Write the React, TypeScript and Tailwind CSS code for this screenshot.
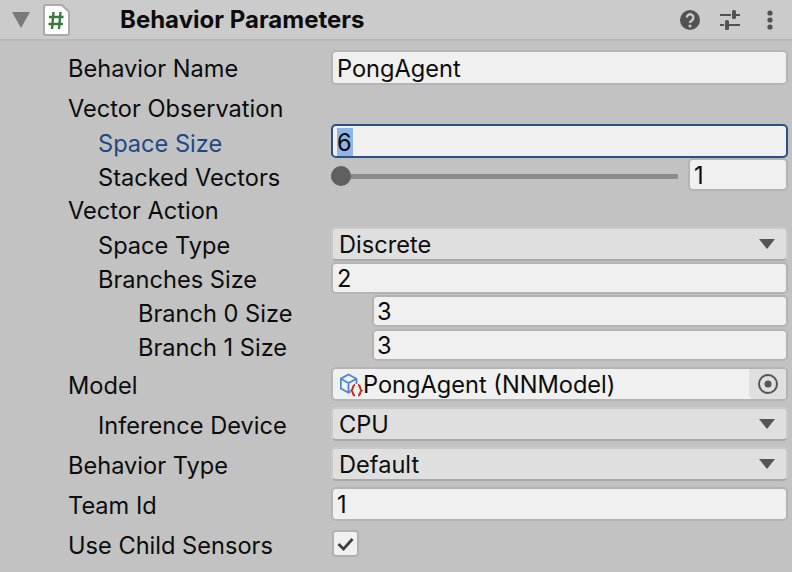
import React from "react";

const font = { fontFamily: "Inter, 'Liberation Sans', sans-serif" };

function Input({ value, className = "h-[34px] mb-[2px] pl-[4px]" }: { value: string; className?: string }) {
  return (
    <div className={`flex items-center rounded-[5px] border-2 border-[#b4b4b4] bg-[#f0f0f0] pt-[2px] ${className}`}>
      {value}
    </div>
  );
}

function Dropdown({ value }: { value: string }) {
  return (
    <div className="mb-[2px] flex h-[34px] items-center justify-between rounded-[5px] border-2 border-t-[#c9c9c9] border-x-[#c9c9c9] border-b-[#a8a8a8] bg-[#dfdfdf] pl-[6px] pr-[11px]">
      <span className="pt-[1px]">{value}</span>
      <svg width="16" height="10" viewBox="0 0 16 10"><path d="M0 0h16l-8 10z" fill="#555550" /></svg>
    </div>
  );
}

const labelCol = ["w-[331px] pl-[68px]", "w-[331px] pl-[98px]", "w-[372px] pl-[138px]"];

function Row({ label, indent = 0, h, mt = "", children, labelClass = "" }: { label: string; indent?: number; h: string; mt?: string; children?: React.ReactNode; labelClass?: string }) {
  return (
    <div className={`flex items-center pr-[4px] ${h} ${mt}`}>
      <span className={`shrink-0 whitespace-nowrap pt-[1px] ${labelCol[indent]} ${labelClass}`}>{label}</span>
      <div className="min-w-0 flex-1">{children}</div>
    </div>
  );
}

export default function App() {
  return (
    <div className="h-[572px] w-[792px] overflow-hidden bg-[#c2c2c2] text-[23.6px] leading-none text-[#0c0c0c]" style={font}>
      <div className="flex h-[41px] items-center border-b-2 border-[#b8b8b8] bg-[#cbcbcb]">
        <svg className="ml-[12px]" width="18" height="16" viewBox="0 0 18 16"><path d="M0 0h18l-9 16z" fill="#7a7a7a" /></svg>
        <svg className="ml-[13px]" width="27" height="32" viewBox="0 0 27 32">
          <path d="M3 1h16l7 7v21a2 2 0 0 1-2 2H3a2 2 0 0 1-2-2V3a2 2 0 0 1 2-2z" fill="#fff" stroke="#ababab" strokeWidth="2" />
          <path d="M10.500 8L9 25M17.500 8L16 25M6 13h14.500M5.500 20h14.500" stroke="#3b7a3f" strokeWidth="2.400" fill="none" />
        </svg>
        <span className="ml-[50px] text-[24px] font-bold">Behavior Parameters</span>
        <svg className="ml-auto" width="20" height="20" viewBox="0 0 20 20">
          <circle cx="10" cy="10" r="10" fill="#525252" />
          <path d="M6.800 7.600a3.300 3.300 0 1 1 5 2.800c-1.200.8-1.800 1.200-1.800 2.600" stroke="#cbcbcb" strokeWidth="2.400" fill="none" />
          <circle cx="10" cy="16" r="1.500" fill="#cbcbcb" />
        </svg>
        <svg className="ml-[20px]" width="20" height="20" viewBox="0 0 20 20" fill="#525252">
          <rect x="0" y="4" width="11" height="2" /><rect x="12" y="0" width="4" height="9" rx="1.500" /><rect x="16" y="4" width="4" height="2" />
          <rect x="0" y="14" width="4" height="2" /><rect x="5" y="10" width="4" height="10" rx="1.500" /><rect x="9" y="14" width="11" height="2" />
        </svg>
        <svg className="ml-[27px] mr-[19px]" width="6" height="20" viewBox="0 0 6 20" fill="#525252">
          <circle cx="3" cy="3" r="2.600" /><circle cx="3" cy="10" r="2.600" /><circle cx="3" cy="17" r="2.600" />
        </svg>
      </div>

      <Row label="Behavior Name" h="h-[36px]" mt="mt-[9px]"><Input value="PongAgent" className="mb-[1px] h-[35px] pl-[4px]" /></Row>
      <Row label="Vector Observation" h="h-[36px]" mt="mt-[4px]" />
      <Row label="Space Size" indent={1} h="h-[36px]" mt="mt-[-1px]" labelClass="text-[#1d4a86]">
        <div className="mb-[4px] flex h-[34px] items-end rounded-[5px] border-2 border-[#275187] bg-[#f0f0f0] pl-[4px]">
          <span className="flex h-[28px] w-[16px] items-center bg-[#8fb4e6] pt-[1px]">6</span>
        </div>
      </Row>
      <Row label="Stacked Vectors" indent={1} h="h-[34px]" mt="mt-[-1px]">
        <div className="mb-[5px] flex h-[33px] items-start">
          <div className="relative mt-[8px] flex h-[20px] w-[347px] items-center">
            <div className="h-[5px] w-full bg-[#8c8c8c]" />
            <div className="absolute left-0 h-[20px] w-[20px] rounded-full bg-[#5f5f5f]" />
          </div>
          <Input value="1" className="ml-[10px] h-[33px] flex-1 pl-[4px]" />
        </div>
      </Row>
      <Row label="Vector Action" h="h-[34px]" mt="mt-[-1px]" />
      <Row label="Space Type" indent={1} h="h-[36px]"><Dropdown value="Discrete" /></Row>
      <Row label="Branches Size" indent={1} h="h-[34px]" mt="mt-[-1px]"><Input value="2" className="mb-[2px] h-[32px] pl-[4px]" /></Row>
      <Row label="Branch 0 Size" indent={2} h="h-[34px]"><Input value="3" className="mb-[4px] h-[32px] pl-[3px]" /></Row>
      <Row label="Branch 1 Size" indent={2} h="h-[34px]"><Input value="3" className="mb-[4px] h-[32px] pl-[3px]" /></Row>
      <Row label="Model" h="h-[36px]" mt="mt-[3px]">
        <div className="mb-[2px] flex h-[34px] items-center overflow-hidden rounded-[5px] border-2 border-[#b4b4b4] bg-[#f0f0f0] pl-[7px]">
          <svg width="23" height="26" viewBox="0 0 23 26">
            <path d="M8.500 3.500l8 4.200v9.800l-8 4.300-7.700-4.300V7.700zM.8 7.700l7.700 4.300 8-4.300M8.500 12v9.800" fill="none" stroke="#4a86d8" strokeWidth="1.800" />
            <rect x="10.500" y="13" width="12" height="13" fill="#f0f0f0" />
            <path d="M15 14c-2.800 0-1.500 4.300-3.500 5.500 2 1.200.7 5 3.500 5M18 14c2.800 0 1.500 4.300 3.500 5.500-2 1.200-.7 5-3.500 5" fill="none" stroke="#c4301f" strokeWidth="2" />
          </svg>
          <span className="pt-[2px]">PongAgent (NNModel)</span>
          <div className="ml-auto flex h-full w-[37px] items-center justify-center rounded-bl-[5px] bg-[#dfdfdf]">
            <svg width="20" height="20" viewBox="0 0 20 20"><circle cx="10" cy="10" r="9" fill="none" stroke="#555" strokeWidth="2" /><circle cx="10" cy="10" r="3.500" fill="#555" /></svg>
          </div>
        </div>
      </Row>
      <Row label="Inference Device" indent={1} h="h-[36px]" mt="mt-[4px]"><Dropdown value="CPU" /></Row>
      <Row label="Behavior Type" h="h-[36px]" mt="mt-[4px]"><Dropdown value="Default" /></Row>
      <Row label="Team Id" h="h-[36px]" mt="mt-[4px]"><Input value="1" /></Row>
      <Row label="Use Child Sensors" h="h-[36px]" mt="mt-[4px]">
        <div className="mb-[3px] ml-[1px] flex h-[27px] w-[27px] items-center justify-center rounded-[4px] border-2 border-[#b0b0b0] bg-[#f0f0f0]">
          <svg width="17" height="14" viewBox="0 0 17 14"><path d="M1.500 7l5 5L15.500 2" fill="none" stroke="#404040" strokeWidth="2.800" /></svg>
        </div>
      </Row>
    </div>
  );
}
